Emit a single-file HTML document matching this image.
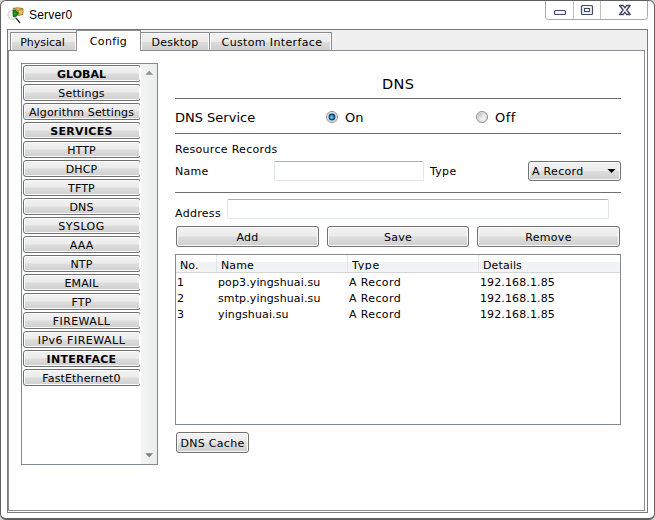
<!DOCTYPE html>
<html><head><meta charset="utf-8"><title>Server0</title>
<style>
html,body{margin:0;padding:0;}
body{width:655px;height:520px;overflow:hidden;background:#d4d4d4;position:relative;font-family:"DejaVu Sans","Liberation Sans",sans-serif;font-size:11px;color:#000;}
.abs{position:absolute;}
#win{position:absolute;left:0;top:0;width:653px;height:517px;border:1px solid #606060;border-bottom-width:2px;border-radius:6px;background:#fff;}
#title{position:absolute;left:29px;top:8px;letter-spacing:0.2px;font:12px "Liberation Sans",sans-serif;color:#000;line-height:14px;}
#frame{position:absolute;left:7px;top:29px;width:639px;height:482px;border:1px solid #7a7a7a;background:#f0f0f0;}
#pane{position:absolute;left:8px;top:50px;width:635px;height:459px;border:1px solid #898c95;background:#fff;}
#paneR{position:absolute;left:645px;top:50px;width:2px;height:462px;background:#fff;}
#paneB{position:absolute;left:8px;top:511px;width:639px;height:1px;background:#fff;}
.tab{position:absolute;top:32px;height:17px;border:1px solid #898c95;box-sizing:content-box;background:linear-gradient(#f2f2f2 0%,#ebebeb 50%,#dddddd 50%,#cfcfcf 100%);box-shadow:inset 1px 1px 0 #fcfcfc,inset -1px 0 0 #fcfcfc;text-align:center;line-height:19px;font-size:11px;letter-spacing:0;}
.tab.sel{top:30px;height:20px;background:#fff;border-bottom:none;box-shadow:none;line-height:22px;z-index:3;letter-spacing:0.35px;}
.btn{position:absolute;box-sizing:border-box;border:1px solid #707070;border-radius:3px;background:linear-gradient(#f2f2f2 0%,#ebebeb 48%,#dddddd 52%,#cfcfcf 100%);box-shadow:inset 0 0 0 1px #fcfcfc;text-align:center;font-size:11px;letter-spacing:0.3px;white-space:nowrap;}
.sb{left:1px;width:118px;height:17px;line-height:18px;letter-spacing:0.15px;text-indent:-1px;}
.sb.b{font-weight:bold;letter-spacing:0.3px;}
.rule{position:absolute;left:175px;width:446px;height:1px;background:#6f6f6f;}
.lbl{position:absolute;white-space:nowrap;line-height:14px;letter-spacing:0.3px;}
.big{font-size:13px;letter-spacing:0;line-height:16px;}
.inp{position:absolute;box-sizing:border-box;border:1px solid #e0e4eb;border-top-color:#abadb3;border-radius:2px;background:#fff;}
.radio{position:absolute;width:12px;height:12px;}
#tbl{position:absolute;left:175px;top:254px;width:444px;height:169px;border:1px solid #828790;background:#fff;}
#thead{position:absolute;left:0;top:0;width:444px;height:17px;background:linear-gradient(#fff 0%,#fff 40%,#f1f2f4 44%,#f3f4f6 100%);border-bottom:1px solid #d5d5d5;}
.vd{position:absolute;top:0;width:1px;height:17px;background:#e3e5e9;}
.cell{position:absolute;white-space:nowrap;line-height:14px;letter-spacing:0.12px;}
</style></head><body>
<div id="win"></div>
<!-- icon -->
<svg class="abs" style="left:7px;top:6px" width="18" height="18" viewBox="0 0 18 18">
 <circle cx="5.4" cy="8.8" r="4.5" fill="#f1f1f1" stroke="#c4c4c4" stroke-width="0.9"/>
 <line x1="9.2" y1="12.4" x2="12.8" y2="16.6" stroke="#1c1c1c" stroke-width="1.3" stroke-linecap="round"/>
 <polygon points="6.3,2.2 11,1.800 16,2.500 16,8.200 11.800,9.600 6.300,7.500" fill="#edc057" stroke="#7c6218" stroke-width="0.7" stroke-linejoin="round"/>
 <polyline points="6.600,2.500 11.400,4.600 15.800,2.800" fill="none" stroke="#7d621a" stroke-width="0.7"/>
 <line x1="11.400" y1="4.600" x2="11.700" y2="9.300" stroke="#9c7d28" stroke-width="0.6"/>
 <polygon points="6.200,4.200 9,4.600 11.600,7.300 8.300,11.100 6.200,10.400" fill="#0d8a14" stroke="#07500a" stroke-width="0.7" stroke-linejoin="round"/>
 <polygon points="7.300,6 9.300,7.400 7.600,9.300" fill="#35b23a"/>
</svg>
<div id="title">Server0</div>
<!-- caption buttons -->
<svg class="abs" style="left:544px;top:0" width="105" height="22" viewBox="0 0 105 22">
 <path d="M1.5 1 V16.5 Q1.5 19.5 4.5 19.5 H100.5 Q103.5 19.5 103.5 16.5 V1" fill="#fff" stroke="#a9a9a9" stroke-width="1"/>
 <line x1="29.5" y1="1" x2="29.5" y2="19" stroke="#c0c0c0"/>
 <line x1="56.5" y1="1" x2="56.5" y2="19" stroke="#c0c0c0"/>
 <rect x="10.5" y="10.5" width="11" height="4" rx="1" fill="#f4f4f8" stroke="#434a66" stroke-width="1.2"/>
 <rect x="37.5" y="5.500" width="11" height="9" rx="1" fill="#f4f4f8" stroke="#434a66" stroke-width="1.2"/>
 <rect x="40.500" y="8.500" width="5" height="3" fill="#fff" stroke="#434a66" stroke-width="1.1"/>
 <path d="M75.600 5.500 h3.700 l1.600 2.300 l1.600 -2.300 h3.700 l-3.500 4.500 l3.500 4.500 h-3.700 l-1.600 -2.300 l-1.600 2.300 h-3.700 l3.500 -4.500 z" fill="#f4f4f8" stroke="#3f4663" stroke-width="1.3" stroke-linejoin="round"/>
</svg>
<div id="frame"></div>
<div id="pane"></div>
<div id="paneR"></div><div id="paneB"></div>
<!-- tabs -->
<div class="tab" style="left:10px;width:65px;text-indent:-2px;">Physical</div>
<div class="tab sel" style="left:76px;width:63px;">Config</div>
<div class="tab" style="left:140px;width:68px;letter-spacing:0.22px;">Desktop</div>
<div class="tab" style="left:209px;width:121px;letter-spacing:0.37px;text-indent:3px;">Custom Interface</div>
<!-- sidebar -->
<div class="abs" style="left:21px;top:63px;width:135px;height:400px;border:1px solid #828790;background:#fff;"></div>
<div class="abs" style="left:141px;top:64px;width:16px;height:400px;background:linear-gradient(to right,#f4f4f4,#ececec);"></div>
<svg class="abs" style="left:141px;top:64px" width="16" height="400" viewBox="0 0 16 400">
 <polygon points="4.300,10.800 8.200,6.800 12.100,10.800" fill="#909090"/>
 <polygon points="4.300,389.300 8.200,393.300 12.100,389.300" fill="#7a7a7a"/>
</svg>
<div class="abs" style="left:22px;top:64px;width:118px;height:400px;overflow:hidden;">
<div class="btn sb b" style="top:1px;letter-spacing:0.05px">GLOBAL</div>
<div class="btn sb" style="top:20px">Settings</div>
<div class="btn sb" style="top:39px">Algorithm Settings</div>
<div class="btn sb b" style="top:58px">SERVICES</div>
<div class="btn sb" style="top:77px">HTTP</div>
<div class="btn sb" style="top:96px">DHCP</div>
<div class="btn sb" style="top:115px">TFTP</div>
<div class="btn sb" style="top:134px">DNS</div>
<div class="btn sb" style="top:153px;letter-spacing:0.45px">SYSLOG</div>
<div class="btn sb" style="top:172px">AAA</div>
<div class="btn sb" style="top:191px">NTP</div>
<div class="btn sb" style="top:210px">EMAIL</div>
<div class="btn sb" style="top:229px">FTP</div>
<div class="btn sb" style="top:248px;letter-spacing:0.4px">FIREWALL</div>
<div class="btn sb" style="top:267px;letter-spacing:0.5px">IPv6 FIREWALL</div>
<div class="btn sb b" style="top:286px">INTERFACE</div>
<div class="btn sb" style="top:305px">FastEthernet0</div>
</div>
<!-- main -->
<div class="lbl" style="left:382px;top:75px;font-size:14.5px;line-height:18px;letter-spacing:0.4px;">DNS</div>
<div class="rule" style="top:98px"></div>
<div class="lbl big" style="left:175px;top:110px;">DNS Service</div>
<svg class="radio" style="left:326px;top:111px" viewBox="0 0 12 12">
 <circle cx="6" cy="6" r="5.500" fill="#f2f2f2" stroke="#8e8f8f"/>
 <circle cx="6" cy="6" r="4.300" fill="#ececec" stroke="#cfcfcf" stroke-width="0.8"/>
 <defs><radialGradient id="rg" cx="0.42" cy="0.58" r="0.6"><stop offset="0" stop-color="#5fd4f8"/><stop offset="0.55" stop-color="#1f9ad6"/><stop offset="1" stop-color="#0e4f86"/></radialGradient></defs>
 <circle cx="6" cy="6" r="2.900" fill="url(#rg)" stroke="#173a62" stroke-width="1.100"/>
</svg>
<div class="lbl big" style="left:345px;top:110px;">On</div>
<svg class="radio" style="left:476px;top:111px" viewBox="0 0 12 12">
 <defs><linearGradient id="og" x1="0.15" y1="0.15" x2="0.85" y2="0.85"><stop offset="0" stop-color="#c2c6cb"/><stop offset="0.5" stop-color="#e6e8ea"/><stop offset="1" stop-color="#fdfdfd"/></linearGradient></defs>
 <circle cx="6" cy="6" r="5.500" fill="#f0f0f0" stroke="#8a8b8b"/>
 <circle cx="6" cy="6" r="4.200" fill="url(#og)" stroke="#cdcdcd" stroke-width="0.8"/>
</svg>
<div class="lbl big" style="left:495px;top:110px;letter-spacing:0.5px;">Off</div>
<div class="rule" style="top:133px"></div>
<div class="lbl" style="left:175px;top:143px;">Resource Records</div>
<div class="lbl" style="left:175px;top:165px;">Name</div>
<div class="inp" style="left:274px;top:161px;width:150px;height:20px;"></div>
<div class="lbl" style="left:430px;top:165px;">Type</div>
<div class="btn" style="left:528px;top:161px;width:93px;height:20px;text-align:left;padding-left:3px;line-height:20px;">A Record</div>
<svg class="abs" style="left:607px;top:168px" width="9" height="6" viewBox="0 0 9 6"><polygon points="0.500,1 8.500,1 4.500,5" fill="#000"/></svg>
<div class="rule" style="top:192px"></div>
<div class="lbl" style="left:175px;top:207px;">Address</div>
<div class="inp" style="left:227px;top:199px;width:382px;height:20px;"></div>
<div class="btn" style="left:176px;top:226px;width:143px;height:21px;line-height:21px;">Add</div>
<div class="btn" style="left:327px;top:226px;width:142px;height:21px;line-height:21px;">Save</div>
<div class="btn" style="left:477px;top:226px;width:143px;height:21px;line-height:21px;">Remove</div>
<div id="tbl">
 <div id="thead"></div>
 <div class="vd" style="left:40px"></div><div class="vd" style="left:171px"></div><div class="vd" style="left:302px"></div>
 <div class="cell" style="left:4px;top:4px;height:11px;overflow:hidden;">No.</div>
 <div class="cell" style="left:45px;top:4px;height:11px;overflow:hidden;">Name</div>
 <div class="cell" style="left:176px;top:4px;height:11px;overflow:hidden;letter-spacing:0.65px;">Type</div>
 <div class="cell" style="left:307px;top:4px;height:11px;overflow:hidden;">Details</div>
 <div class="cell" style="left:1px;top:21px;">1</div><div class="cell" style="left:42px;top:21px;">pop3.yingshuai.su</div><div class="cell" style="left:173px;top:21px;letter-spacing:0.37px;">A Record</div><div class="cell" style="left:304px;top:21px;">192.168.1.85</div>
 <div class="cell" style="left:1px;top:37px;">2</div><div class="cell" style="left:42px;top:37px;">smtp.yingshuai.su</div><div class="cell" style="left:173px;top:37px;letter-spacing:0.37px;">A Record</div><div class="cell" style="left:304px;top:37px;">192.168.1.85</div>
 <div class="cell" style="left:1px;top:53px;">3</div><div class="cell" style="left:42px;top:53px;">yingshuai.su</div><div class="cell" style="left:173px;top:53px;letter-spacing:0.37px;">A Record</div><div class="cell" style="left:304px;top:53px;">192.168.1.85</div>
</div>
<div class="btn" style="left:176px;top:432px;width:73px;height:21px;line-height:21px;">DNS Cache</div>
</body></html>
